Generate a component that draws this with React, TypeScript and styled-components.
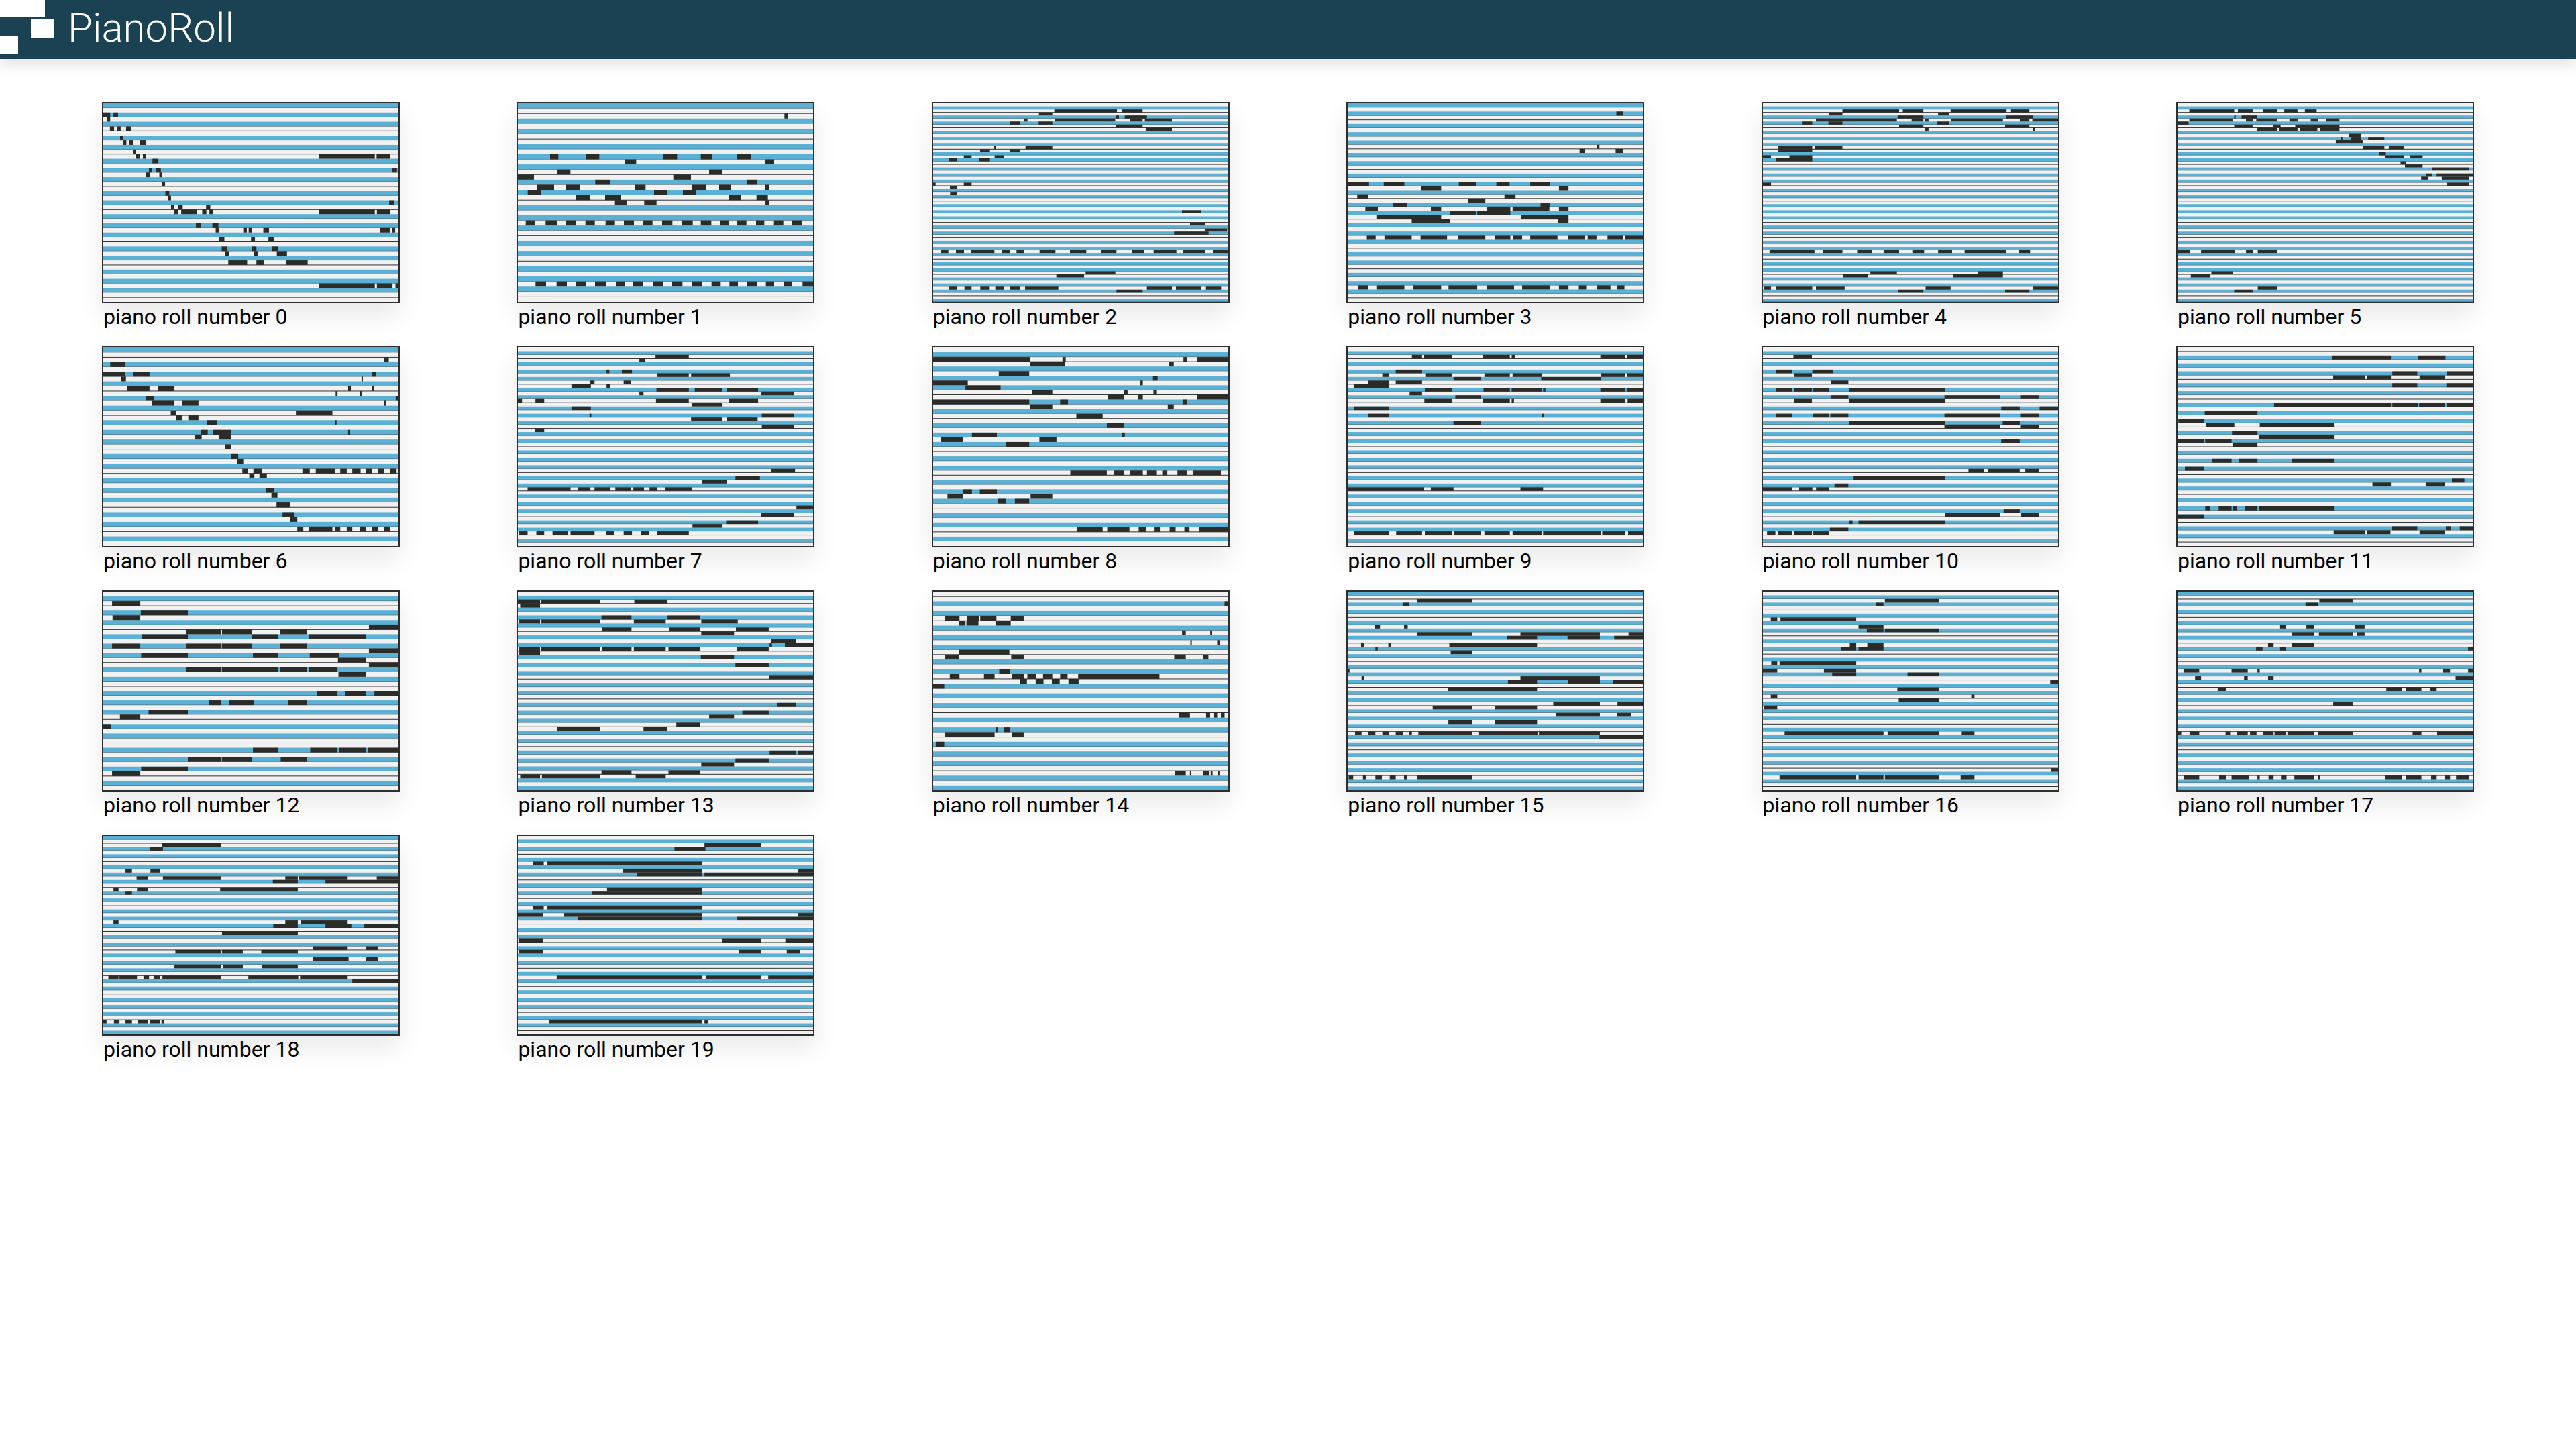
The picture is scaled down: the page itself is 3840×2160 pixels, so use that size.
import React from 'react';
import styled, { createGlobalStyle } from 'styled-components';

const GlobalStyle = createGlobalStyle`
  body {
    margin: 0;
    background: #ffffff;
    font-family: Roboto, "Liberation Sans", sans-serif;
  }
`;

const Header = styled.header`
  display: flex;
  align-items: flex-start;
  height: 88px;
  background: #1a4253;
  box-shadow: 0 8px 20px rgba(0, 0, 0, 0.12);
`;

const Logo = styled.svg`
  display: block;
  flex: none;
  width: 80px;
  height: 80px;
`;

const Title = styled.h1`
  margin: 0 0 0 21px;
  font-size: 60px;
  font-weight: 300;
  line-height: 84px;
  color: #ffffff;
`;

const Gallery = styled.main`
  display: grid;
  grid-template-columns: repeat(6, 444px);
  grid-auto-rows: 364px;
  column-gap: 174.4px;
  padding: 64px 0 0 152px;
`;

const Card = styled.figure`
  margin: 0;
`;

const Frame = styled.div`
  width: 440px;
  height: 296px;
  border: 2px solid #2e2e2e;
  box-shadow: 0 18px 36px rgba(0, 0, 0, 0.09);
`;

const Roll = styled.svg`
  display: block;
  width: 440px;
  height: 296px;
`;

const Caption = styled.figcaption`
  padding-left: 2px;
  font-size: 32px;
  line-height: 40px;
  color: #000000;
`;

const WIDTH = 440;
const HEIGHT = 296;
const BLACK_KEYS = [0, 2, 4, 7, 9];

interface RollData {
  rows: number;
  phase: number;
  // where the traced coordinates below start, and how wide the roll is in them
  top: number;
  left: number;
  span: number;
  // [y, x0, x1, x0, x1, ...]
  notes: number[][];
}

const ROLLS: RollData[] = [
  { rows: 43, phase: 0, top: 462, left: 345, span: 985, notes: [
    [513,345,368,379,394],[534,357,368],[575,367,381,390,403,421,437],[617,401,412],[637,411,422,432,444,466,487],
    [679,444,454],[700,454,466,477,487,1065,1251,1257,1302],[720,509,529],[761,497,508,521,537,1310,1325],[782,488,501,532,541],
    [823,541,551],[865,552,565],[885,562,571],[906,1299,1315],[927,571,582,595,610,688,702],
    [947,582,595,605,657,675,689,699,710,1065,1251,1258,1302],[1009,654,670,709,729],[1030,720,732,812,824,830,842,879,898,1268,1302,1309,1319],
    [1071,730,749,838,851,896,915],[1112,740,757,841,856,908,928],[1133,751,764,848,861,924,958],[1175,762,825,856,880,955,1027],
    [1278,1065,1251,1258,1310,1320,1330],
  ] },
  { rows: 39, phase: 4, top: 42, left: 66, span: 1320, notes: [
    [98,1258,1273],[281,210,247,371,430,715,778,884,936,1046,1107],[303,545,595,1173,1212],[349,241,301,921,980],[372,66,138,761,840],
    [394,412,477,1089,1137],[417,153,228,281,342,591,637,845,909,966,1018,1173,1188],[440,110,168,675,735,804,863],
    [463,326,387,456,528,1009,1064,1133,1184],[486,500,555,631,686,1171,1188],
    [577,101,144,190,241,279,325,368,410,458,500,540,585,625,668,711,757,799,848,884,931,969,1010,1047,1088,1131,1168,1211,1253,1292,1337],
    [850,145,192,239,285,327,371,411,459,504,544,581,627,671,715,753,802,845,890,932,973,1012,1050,1089,1134,1175,1212,1256,1290,1339,1386],
  ] },
  { rows: 65, phase: 3, top: 42, left: 60, span: 1320, notes: [
    [75,602,882,906,997],[89,533,593],[103,879,891,917,1016],[117,467,482,605,874,942,997,1007,1128],[130,402,449,532,593],
    [144,879,997],[158,1011,1128],[240,330,342,473,593],[254,270,314,404,449],[281,197,232,335,375],[295,129,165,265,314],
    [404,60,71,197,232],[418,135,165],[445,136,165],[527,1173,1258],[582,1209,1275],[609,1277,1375],[623,1138,1292],
    [705,95,128,162,198,231,334,366,402,433,468,536,607,672,745,810,880,948,1002,1046,1148,1176,1278,1311,1380],
    [800,742,875],[814,611,735],[869,131,165,200,232,271,313,338,375,405,449,471,620,1016,1128,1146,1258,1280,1348],[883,880,997],
  ] },
  { rows: 48, phase: 7, top: 27, left: 18, span: 401, notes: [
    [73,383,392],[221,357,360],[239,333,340,382,392],[387,18,47,67,95,169,192,220,238,266,293],[406,118,145,305,318],[443,31,46,231,246],
    [462,182,205],[480,80,99,280,293],[498,42,59,131,145,207,239,242,292,305,318],[517,157,192,194,239],[535,57,145,254,318],[554,105,157,304,318],
    [628,44,56,68,105,117,153,168,205,218,239,243,255,266,303,317,340,344,356,371,392,395,419],
    [850,32,46,57,95,107,145,155,194,207,244,255,293,305,318,332,342,357,375,384,394],
  ] },
  { rows: 65, phase: 3, top: 27, left: 582, span: 401, notes: [
    [61,690,767,772,800,837,913,919,944],[75,672,690,820,835],[88,765,800,912,949],[102,654,764,784,800,802,807,838,908,931,944,948,983],
    [116,635,649,671,690,819,835],[130,767,800,911,944],[143,802,807,949,952],[225,603,649,653,690],[239,603,649],[267,582,593,618,649],[280,600,649],
    [390,582,593],[689,591,652,664,690,710,730,746,767,785,801,820,839,856,912,930,945],[785,728,764,874,908],[799,691,725,840,908],
    [853,583,593,600,649,654,693,803,837,949,983],[867,766,800,911,944],
  ] },
  { rows: 65, phase: 3, top: 27, left: 1145, span: 401, notes: [
    [61,1161,1222,1227,1247,1261,1280,1290,1308,1318,1334],[88,1222,1224,1232,1253],[102,1161,1220,1238,1248,1252,1280,1297,1308,1326,1336,1347,1365],
    [116,1145,1160],[130,1222,1247,1275,1285,1305,1365],[143,1253,1280,1283,1308,1311,1335,1339,1365],[171,1378,1394],[184,1367,1369,1381,1394,1404,1426],
    [198,1360,1397],[225,1397,1426,1432,1453],[253,1419,1428],[266,1427,1453,1461,1478],[294,1448,1455],[307,1454,1478],[321,1491,1541],
    [349,1483,1491,1497,1546],[363,1476,1485,1504,1541],[390,1511,1541],[689,1145,1162,1177,1223,1238,1248,1254,1280],[785,1191,1220],[799,1163,1189],
    [853,1254,1280],[867,1222,1247],
  ] },
  { rows: 41, phase: 9, top: 24, left: 13, span: 639, notes: [
    [78,621,631],[99,28,61],[143,13,61,78,113,595,603],[164,52,62,572,575],[208,64,113,132,167,543,549,595,599],[229,516,520,568,573],[251,106,122,646,652],
    [272,119,167,184,219,621,625],[316,159,171,430,509],[338,171,184,197,219],[360,238,259,514,518],[403,225,239,251,290,543,546],[424,212,226,264,290],
    [467,277,290],[511,290,305],[532,302,316],[576,314,326,338,357,444,460,473,514,526,540,552,570,581,595,607,621,634,648],[598,329,340,351,367],
    [662,365,383],[684,377,390],[727,388,418],[771,401,427],[792,418,433],[836,433,446,458,509,514,526,540,552,569,582,595,607,621,634],
  ] },
  { rows: 54, phase: 8, top: 24, left: 910, span: 639, notes: [
    [65,1208,1280],[81,1173,1185],[130,1102,1108,1135,1157],[147,1211,1280,1285,1369],[180,1066,1076,1139,1155],[196,1026,1068,1102,1109],
    [213,1210,1280,1293,1353,1362,1430],[229,1173,1182,1436,1507],[262,910,919,948,967,1209,1280,1366,1430],[279,1287,1353],[295,1026,1068],
    [328,1065,1069,1438,1507],[344,1285,1353,1362,1429],[377,1438,1507],[394,947,967],[575,1458,1510],[607,1381,1434],[624,1308,1362],
    [657,931,1024,1040,1067,1076,1109,1121,1155,1160,1183,1195,1212,1229,1287],[739,1513,1549],[772,1437,1507],[805,1361,1430],[821,1288,1353],
    [854,912,931,950,967,985,1019,1024,1076,1101,1119,1139,1157,1177,1194,1212,1280],
  ] },
  { rows: 42, phase: 8, top: 24, left: 15, span: 639, notes: [
    [76,15,225,295,302,557,564,587,654],[97,225,301,525,536],[140,157,223],[161,491,501],[182,15,90,463,469],[204,85,161],[225,229,273,428,436,492,498],
    [246,393,428,459,469,586,654],[267,15,223,290,307,555,564],[288,225,273,523,536],[330,325,382],[373,391,428],[415,99,153,424,430],[436,32,80,245,282],
    [457,173,223],[584,312,391,407,428,441,469,478,498,511,522,544,564,577,638],[669,80,99,116,153],[690,46,80,226,273],[711,155,172,192,223],
    [838,327,382,392,440,460,476,493,506,527,540,559,570,591,653],
  ] },
  { rows: 54, phase: 8, top: 24, left: 915, span: 639, notes: [
    [65,1054,1076,1080,1141,1208,1266,1270,1278,1462,1516,1520,1554],[130,1019,1076],[147,990,1005,1083,1141,1211,1266,1272,1335,1464,1516,1520,1554],
    [163,1144,1204,1334,1463],[180,960,1005,1019,1076],[196,928,1005],[213,1082,1141,1209,1266,1270,1335,1338,1343,1462,1516,1519,1554],[229,1049,1076],
    [245,1148,1204],[262,1081,1141,1208,1266,1270,1275,1462,1516,1521,1554],[295,928,1005],[328,959,1005,1336,1340],[361,1144,1204],
    [657,915,1080,1095,1144,1289,1338],[854,928,1005,1020,1076,1082,1141,1146,1204,1211,1266,1272,1335,1338,1463,1466,1516,1522,1554],
  ] },
  { rows: 54, phase: 8, top: 24, left: 12, span: 639, notes: [
    [65,78,118],[130,41,75,119,163],[147,80,118],[180,160,197],[213,41,75,79,118,121,155,199,407],[245,159,197,405,526,569,610],[262,80,118,199,407],
    [295,528,568,611,651],[328,41,75,120,155,158,197,405,526,569,610],[361,199,407,531,568],[377,405,526,569,610],[443,528,568],[575,457,491,500,568,580,610],
    [608,207,407],[640,167,197],[657,12,75,90,119,127,155],[756,533,568],[772,407,526,571,610],[805,199,206,219,407],[838,157,197],[854,21,39,44,75,80,118,121,155],
  ] },
  { rows: 50, phase: 10, top: 24, left: 909, span: 639, notes: [
    [68,1243,1371,1430,1489],[139,1374,1428,1492,1548],[157,1246,1315,1319,1371,1433,1488],[192,1374,1428,1491,1548],[282,1118,1371,1374,1429,1432,1488,1492,1548],
    [317,968,1082],[352,911,966],[370,971,1032,1087,1249],[405,1027,1082],[423,1086,1249],[441,909,966,969,1026],[459,1028,1082],[530,983,1026,1042,1082,1157,1249],
    [566,925,966],[618,1503,1530],[636,1331,1371,1447,1488],[743,969,979,998,1026,1028,1038,1055,1082,1085,1249],[779,909,966],[832,1373,1428,1490,1500,1520,1548],
    [850,1247,1315,1320,1370,1433,1488],
  ] },
  { rows: 42, phase: 3, top: 21, left: 13, span: 639, notes: [
    [73,32,93],[115,94,196],[137,33,93],[179,588,652],[200,193,268,270,334,395,454],[221,96,196,334,391,458,581],[264,32,93,193,268,270,334,396,454],[285,588,652],
    [306,95,196,337,391,460,524],[327,521,581],[349,588,652],[370,193,268,270,391,395,454,458,520],[391,522,581],[475,476,520,537,582,600,652],
    [518,242,268,285,339,413,454],[560,111,196],[581,49,93],[623,13,30],[729,337,391,461,520,524,581,586,652],[771,196,268,270,334,397,454],[813,95,196],[835,32,93],
  ] },
  { rows: 50, phase: 8, top: 21, left: 910, span: 639, notes: [
    [65,910,958,960,1088,1162,1233],[83,915,958],[136,1091,1156,1234,1305],[154,912,958,961,1088,1161,1230,1307,1386],[189,1093,1156,1237,1304,1382,1453],[207,1307,1378],
    [243,1458,1512],[260,1455,1460,1488,1549],[278,913,958,960,1088,1092,1156,1161,1230,1236,1304,1384,1453],[296,913,958],[314,1306,1378],[349,1381,1453],[402,1454,1549],
    [527,1472,1512],[562,1396,1453],[580,1324,1378],[615,1253,1304],[633,995,1088,1182,1233],[740,1455,1512,1516,1549],[775,1381,1453],[793,1307,1378],
    [829,1091,1156,1236,1304],[846,915,958,962,1088,1165,1230],
  ] },
  { rows: 41, phase: 5, top: 21, left: 15, span: 639, notes: [
    [74,646,654],[140,40,72,89,115,117,152,183,211],[161,71,85,87,113,150,183],[205,554,562,615,618],[249,572,575,630,636],[292,71,180],[313,40,71,184,211,537,562,600,611],
    [378,158,181],[400,51,72,125,148,186,212,219,238,253,273,290,306,329,505],[421,203,218,237,254,272,289,308,330],[443,15,39],[573,548,571,606,614,622,630,638,646],
    [638,151,155,168,181],[659,41,148,186,211],[703,22,39],[833,538,562,571,574,600,612,616,620,632,635],
  ] },
  { rows: 54, phase: 4, top: 21, left: 915, span: 639, notes: [
    [62,1065,1185],[78,1034,1048],[177,974,985,1037,1045],[210,1066,1185,1289,1461,1523,1554],[227,1260,1325,1391,1461,1492,1554],[259,944,950,1003,1009,1135,1325],
    [276,975,980],[292,1138,1185],[375,915,919],[407,945,950,1289,1461],[423,1262,1325,1392,1461,1490,1554],[456,1132,1325],[522,1360,1461,1499,1554],
    [539,1099,1185,1234,1325],[571,1366,1461,1498,1528],[604,1133,1185,1234,1325],[654,931,945,959,975,990,1005,1019,1035,1048,1054,1068,1185,1198,1326,1329,1461],
    [670,1460,1554],[851,917,927,948,955,975,989,1006,1019,1037,1044,1066,1185],
  ] },
  { rows: 54, phase: 6, top: 21, left: 12, span: 639, notes: [
    [62,276,393],[78,256,273],[144,29,43,50,214],[177,219,273],[194,237,273,276,393],[259,200,214,238,273],[276,181,214,219,273],[341,30,43,48,214],[374,12,43,144,214],
    [391,162,214,325,393],[424,634,651],[457,303,393],[490,29,43,463,470],[506,306,393],[539,14,43],[654,59,273,282,393,441,470],[818,636,651],[851,48,214,219,273,276,393,440,470],
  ] },
  { rows: 54, phase: 4, top: 21, left: 909, span: 639, notes: [
    [62,1216,1288],[78,1186,1214],[177,1131,1144,1188,1205,1293,1314],[210,1157,1205,1215,1288,1297,1314],[259,1105,1117,1157,1205],[276,1079,1093,1131,1144,1538,1548],
    [374,922,956,1026,1061,1082,1087,1432,1437,1483,1499,1538,1548],[407,947,960,1053,1061,1105,1117,1511,1548],[457,996,1014,1361,1395,1403,1437,1456,1470],[522,1246,1288],
    [654,909,917,935,956,1013,1023,1038,1061,1066,1080,1094,1117,1119,1143,1147,1205,1214,1288,1418,1437,1471,1548],
    [851,923,956,999,1014,1026,1063,1082,1087,1106,1117,1133,1145,1162,1205,1213,1218,1358,1395,1404,1437,1458,1470,1487,1499,1512,1540],
  ] },
  { rows: 54, phase: 4, top: 18, left: 13, span: 639, notes: [
    [59,140,268],[75,114,142],[174,61,75,115,135],[207,85,109,142,268,407,434,437,542,605,652],[223,380,434,494,652],[256,35,46,86,109,266,434],[272,61,75],
    [404,35,46,407,434,440,542],[421,381,434,494,550,578,652],[454,270,434],[519,467,542,582,607],[535,169,268,270,315,355,434],[568,467,544,582,608],[601,167,268,273,315,356,434],
    [651,24,46,48,86,100,112,123,135,141,268,327,435,439,542],[667,552,652],[848,13,20,36,48,61,75,88,110,114,135,139,144],
  ] },
  { rows: 54, phase: 6, top: 18, left: 910, span: 639, notes: [
    [59,1314,1437],[75,1249,1316],[141,943,966,974,1308],[174,1137,1308,1517,1549],[190,1168,1308,1314,1549],[256,1103,1308],[272,1071,1308],[338,943,966,974,1308],
    [371,910,965,1009,1308,1517,1549],[387,1040,1308,1385,1549],[487,912,965,1352,1437,1489,1549],[536,912,965,1388,1437,1492,1520],[651,994,1308,1317,1437,1452,1549],[848,977,1308,1314,1322],
  ] },
];

const PianoRoll: React.FC<{ data: RollData }> = ({ data }) => {
  const rowHeight = HEIGHT / data.rows;
  const tracePitch = (HEIGHT * 3) / data.rows;
  const keys = Array.from({ length: data.rows }, (_, i) => i);
  const isBlack = (i: number) => BLACK_KEYS.includes((i + data.phase) % 12);

  return (
    <Roll viewBox={`0 0 ${WIDTH} ${HEIGHT}`}>
      <rect width={WIDTH} height={HEIGHT} fill="#f1f1f1" />
      {keys.map((i) =>
        isBlack(i) ? (
          <g key={i}>
            <rect y={i * rowHeight} width={WIDTH} height={rowHeight} fill="#5ab1d5" />
            <rect y={(i + 1) * rowHeight - 0.5} width={WIDTH} height={0.5} fill="#555" />
          </g>
        ) : isBlack(i + 1) ? null : (
          <rect key={i} y={(i + 1) * rowHeight - 0.5} width={WIDTH} height={1} fill="#333" />
        )
      )}
      {data.notes.map((note) => {
        const row = Math.floor((note[0] - data.top) / tracePitch);
        const rects = [];
        for (let n = 1; n < note.length; n += 2) {
          const x0 = ((note[n] - data.left) / data.span) * WIDTH;
          const x1 = ((note[n + 1] - data.left) / data.span) * WIDTH;
          rects.push(
            <rect key={n} x={x0} y={row * rowHeight} width={x1 - x0} height={rowHeight} fill="#2b2b28" />
          );
        }
        return <g key={note[0]}>{rects}</g>;
      })}
    </Roll>
  );
};

const App: React.FC = () => {
  return (
    <>
      <GlobalStyle />
      <Header>
        <Logo viewBox="0 0 80 80">
          <rect x="0" y="0" width="67" height="26" fill="#fff" />
          <rect x="46" y="29" width="34" height="27" fill="#fff" />
          <rect x="0" y="53" width="27" height="27" fill="#fff" />
        </Logo>
        <Title>PianoRoll</Title>
      </Header>
      <Gallery>
        {ROLLS.map((roll, i) => (
          <Card key={i}>
            <Frame>
              <PianoRoll data={roll} />
            </Frame>
            <Caption>piano roll number {i}</Caption>
          </Card>
        ))}
      </Gallery>
    </>
  );
};

export default App;
